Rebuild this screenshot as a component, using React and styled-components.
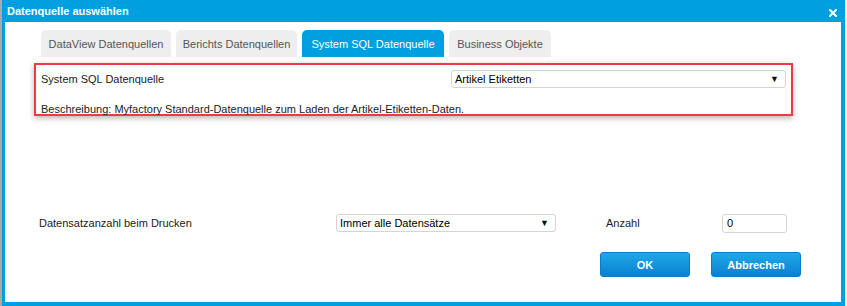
import styled, { createGlobalStyle } from "styled-components";

const GlobalStyle = createGlobalStyle`
  html, body {
    margin: 0;
    padding: 0;
    background: #ffffff;
  }
  body {
    font-family: "Liberation Sans", Arial, sans-serif;
    font-size: 11px;
    color: #222;
  }
`;

const tabs = [
  { label: "DataView Datenquellen", width: 130 },
  { label: "Berichts Datenquellen", width: 121 },
  { label: "System SQL Datenquelle", width: 142, active: true },
  { label: "Business Objekte", width: 102 },
];

const App = () => {
  return (
    <>
      <GlobalStyle />
      <Window>
        <TitleBar>
          <Title>Datenquelle auswählen</Title>
          <CloseButton aria-label="Schließen">
            <svg width="8" height="8" viewBox="0 0 8 8">
              <path d="M1 1 L7 7 M7 1 L1 7" stroke="#fff" strokeWidth="2" strokeLinecap="square" />
            </svg>
          </CloseButton>
        </TitleBar>

        <Body>
          <TabBar>
            {tabs.map((t) => (
              <Tab key={t.label} $active={t.active} $width={t.width}>
                {t.label}
              </Tab>
            ))}
          </TabBar>

          <SourceBox>
            <SourceRow>
              <Label>System SQL Datenquelle</Label>
              <Select $width={335}>
                <span>Artikel Etiketten</span>
                <Arrow>▼</Arrow>
              </Select>
            </SourceRow>
            <Description>
              Beschreibung: Myfactory Standard-Datenquelle zum Laden der Artikel-Etiketten-Daten.
            </Description>
          </SourceBox>

          <PrintRow>
            <PrintLabel>Datensatzanzahl beim Drucken</PrintLabel>
            <Select $width={220}>
              <span>Immer alle Datensätze</span>
              <Arrow>▼</Arrow>
            </Select>
            <CountLabel>Anzahl</CountLabel>
            <CountInput>0</CountInput>
          </PrintRow>

          <ButtonRow>
            <Button>OK</Button>
            <Button>Abbrechen</Button>
          </ButtonRow>
        </Body>
      </Window>
    </>
  );
};

const Window = styled.div`
  width: 845px;
  height: 306px;
  box-sizing: border-box;
  display: flex;
  flex-direction: column;
  background: #009fe0;
  border-left: 2px solid #a9a9a9;
  padding: 0 4px 4px 3px;
`;

const TitleBar = styled.div`
  height: 22px;
  display: flex;
  align-items: center;
  justify-content: space-between;
  padding: 0 4px 0 2px;
`;

const Title = styled.div`
  color: #ffffff;
  font-weight: bold;
  font-size: 11px;
`;

const CloseButton = styled.div`
  display: flex;
  align-items: center;
  margin-top: 4px;
`;

const Body = styled.div`
  flex: 1;
  background: #ffffff;
  display: flex;
  flex-direction: column;
  padding-top: 8px;
`;

const TabBar = styled.div`
  display: flex;
  gap: 5px;
  margin-left: 36px;
  height: 27px;
`;

const Tab = styled.div`
  width: ${(p) => p.$width}px;
  box-sizing: border-box;
  display: flex;
  align-items: center;
  justify-content: center;
  border-radius: 5px 5px 0 0;
  background: ${(p) => (p.$active ? "#009fe0" : "#eeeeee")};
  color: ${(p) => (p.$active ? "#ffffff" : "#555555")};
  font-size: 11px;
`;

const SourceBox = styled.div`
  margin: 6px 0 0 29px;
  width: 759px;
  height: 53px;
  box-sizing: border-box;
  border: 2px solid #ee3a44;
  box-shadow: 0 2px 6px rgba(0, 0, 0, 0.3);
  padding: 5px 5px 0 5px;
`;

const SourceRow = styled.div`
  display: grid;
  grid-template-columns: 410px 1fr;
  align-items: center;
`;

const Label = styled.div`
  color: #222;
`;

const Select = styled.div`
  width: ${(p) => p.$width}px;
  height: 18px;
  box-sizing: border-box;
  border: 1px solid #d4d4d4;
  border-radius: 3px;
  background: #ffffff;
  display: flex;
  align-items: center;
  justify-content: space-between;
  padding: 0 6px 0 3px;
  color: #000;
`;

const Arrow = styled.span`
  font-size: 9px;
  color: #111;
`;

const Description = styled.div`
  margin-top: 15px;
  color: #222;
`;

const PrintRow = styled.div`
  display: flex;
  align-items: center;
  margin: 98px 0 0 34px;
  height: 18px;
`;

const PrintLabel = styled.div`
  width: 297px;
`;

const CountLabel = styled.div`
  margin-left: 50px;
  width: 116px;
`;

const CountInput = styled.div`
  width: 65px;
  height: 19px;
  box-sizing: border-box;
  border: 1px solid #d4d4d4;
  border-radius: 3px;
  display: flex;
  align-items: center;
  padding-left: 4px;
  color: #000;
`;

const ButtonRow = styled.div`
  display: flex;
  gap: 21px;
  margin: 20px 0 0 595px;
`;

const Button = styled.div`
  width: 90px;
  height: 25px;
  box-sizing: border-box;
  border: 1px solid #0a7cc9;
  border-radius: 3px;
  background: linear-gradient(to bottom, #1fa9e8, #0a80d2);
  color: #ffffff;
  font-weight: bold;
  display: flex;
  align-items: center;
  justify-content: center;
`;

export default App;
